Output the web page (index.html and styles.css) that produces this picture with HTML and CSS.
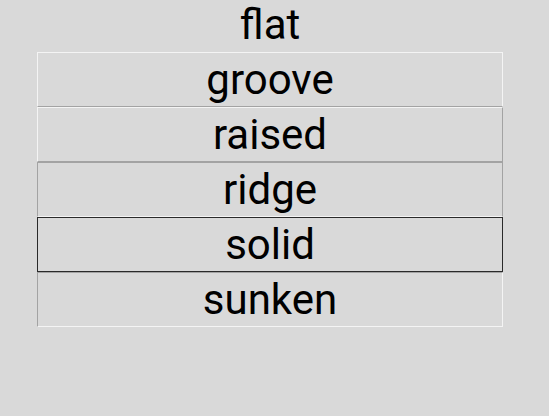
FILE: index.html
```html
<!DOCTYPE html>
<html lang="en">
<head>
    <meta charset="UTF-8">
    <title>Relief styles</title>
    <link rel="stylesheet" href="styles.css">
</head>
<body>
    <div class="reliefs">
        <div class="relief flat">flat</div>
        <div class="relief groove">groove</div>
        <div class="relief raised">raised</div>
        <div class="relief ridge">ridge</div>
        <div class="relief solid">solid</div>
        <div class="relief sunken">sunken</div>
    </div>
</body>
</html>
```
FILE: styles.css
```css
body {
    margin: 0;
    background-color: #d9d9d9;
    font-family: Roboto, "Noto Sans", sans-serif;
    overflow: hidden;
}
.reliefs {
    display: flex;
    flex-direction: column;
    width: 466px;
    margin: -3px 0 0 37px;
}
.relief {
    box-sizing: border-box;
    height: 55px;
    display: flex;
    align-items: center;
    justify-content: center;
    font-size: 42px;
    color: #000;
    border: 1px solid transparent;
}
/* light = #f4f4f4, dark = #a3a3a3 */
.groove {
    border-color: #f4f4f4 #f4f4f4 #a3a3a3 #f4f4f4;
}
.raised {
    border-color: #f4f4f4 #a3a3a3 #a3a3a3 #f4f4f4;
}
.ridge {
    border-color: #a3a3a3 #a3a3a3 #f4f4f4 #a3a3a3;
}
.solid {
    border-color: #2a2a2a;
}
.sunken {
    border-color: #a3a3a3 #f4f4f4 #f4f4f4 #a3a3a3;
}
```
